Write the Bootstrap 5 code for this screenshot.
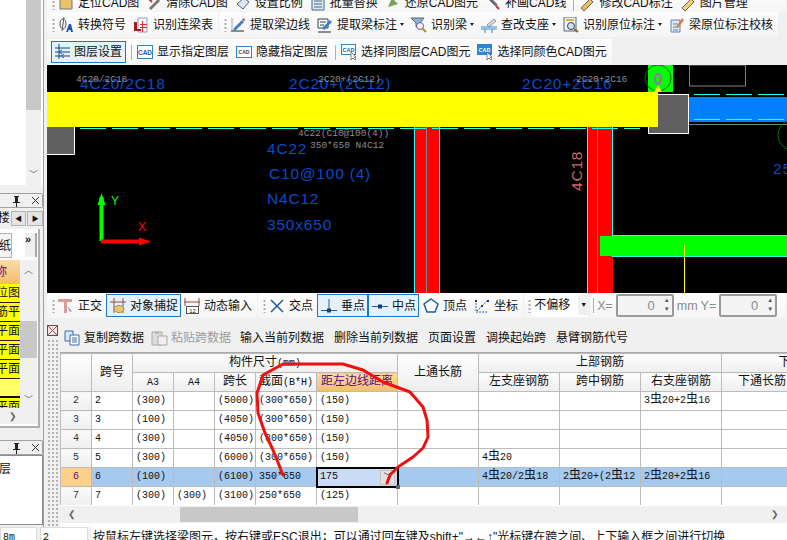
<!DOCTYPE html>
<html lang="zh">
<head>
  <meta charset="UTF-8" />
  <meta name="viewport" content="width=device-width, initial-scale=1" />
  <title>梁原位标注</title>
  <link href="https://cdn.jsdelivr.net/npm/bootstrap@5.3.0/dist/css/bootstrap.min.css" rel="stylesheet" />
  <style>
    html, body { width: 787px; height: 540px; overflow: hidden; }
    body {
      background: #f0f0f0; color: #111; position: relative;
      font: 12px/16px "Liberation Sans", "Noto Sans CJK SC", sans-serif;
    }
    .app-top { height: 527px; }
    svg { display: block; flex: none; }

    /* 左侧停靠栏 */
    .side-col { width: 47px; flex: none; overflow: hidden; }
    .side-in { width: 44px; border-right: 1px solid #a0a0a0; height: 527px; }
    .dock-a { height: 185px; background: #fff; }
    .dock-a-bar { width: 15px; margin: 0 2px 0 auto; background: #f0f0f0; }
    .dock-a-thumb { height: 110px; background: #c8c8c8; }
    .arrow-txt { font-size: 9px; line-height: 12px; text-align: center; color: #666; }
    .dock-head { height: 15px; margin-top: 8px; border: 1px solid #a0a0a0; border-left: 0; border-radius: 0 2px 2px 0; padding-left: 10px; gap: 9px; font-size: 11px; line-height: 13px; }
    .dock-head-low { margin-top: 12px; }
    .tab-row { height: 15px; margin-top: 3px; overflow: hidden; gap: 1px; }
    .tab-chr { width: 10px; font-size: 12px; line-height: 15px; direction: rtl; overflow: hidden; white-space: nowrap; }
    .tab-btn { width: 16px; height: 15px; background: #e4e4e4; border: 1px solid #b4b4b4; font-size: 7px; line-height: 13px; text-align: center; }
    .dock-b { background: #fff; height: 199px; margin-top: 3px; margin-right: 3px; border-right: 2px solid #b0b0b0; border-bottom: 2px solid #b0b0b0; }
    .tab-low { height: 31px; padding-top: 4px; }
    .tab-low-a { width: 12px; height: 25px; border: 1px solid #b4b4b4; border-left: 0; background: #f4f4f4; font-size: 12px; line-height: 24px; overflow: hidden; direction: rtl; }
    .tab-low-b { width: 12px; height: 24px; margin: 0 1px 0 auto; background: #f0f0f0; border-right: 2px solid #a8a8a8; font: 700 11px/12px "Liberation Sans", sans-serif; }
    .name-list { width: 20px; height: 148px; background: #ffff66; overflow: hidden; }
    .name-head { height: 24px; padding-right: 13px; background: linear-gradient(#fbdca8, #f3bc6c); color: #60107a; line-height: 24px; direction: rtl; white-space: nowrap; overflow: hidden; }
    .name-row { height: 19px; background: #ffff00; border-bottom: 1px solid #222; line-height: 18px; white-space: nowrap; direction: rtl; overflow: hidden; }
    .name-gap { height: 19px; background: #ffff66; border-bottom: 2px solid #111; }
    .name-bar { width: 17px; height: 148px; background: #f0f0f0; }
    .name-thumb { height: 37px; margin-top: 45px; margin-bottom: 36px; background: #c8c8c8; }
    .name-foot { height: 16px; background: #f0f0f0; font-size: 9px; line-height: 16px; color: #666; padding-left: 9px; }
    .dock-c { height: 70px; background: #fff; border: 1px solid #8c8c8c; border-left: 0; padding: 4px 31px 0 0; font-size: 12px; line-height: 18px; overflow: hidden; direction: rtl; white-space: nowrap; }

    /* 工具条 */
    .tb-row { flex: none; }
    .tb-clip { height: 12px; align-items: flex-end; overflow: hidden; }
    .tb-row2 { height: 25px; }
    .tb-row3 { height: 26px; margin-top: 2px; }
    .tb-group { height: 100%; padding: 0 5px; gap: 7px; background: linear-gradient(#fdfdfd, #f5f5f5); border-radius: 2px; margin-right: 1px; white-space: nowrap; flex: none; }
    .tb-clip .tb-group { height: 18px; flex: 1 1 auto; }
    .grip { width: 3px; height: 14px; margin-right: -4px; flex: none; background: radial-gradient(circle, #a8a8a8 1px, transparent 1.2px) 0 0 / 3px 4px; }
    .grip-btn { margin-right: -7px; }
    .tb-item { gap: 4px; flex: none; }
    .tb-caret { width: 0; height: 0; margin-left: -1px; margin-right: 0; border: 2.5px solid transparent; border-top: 3px solid #222; border-bottom: 0; }
    .tb-on { padding: 2px 3px; margin: 0; border: 1px solid #1b78c8; background: #e5f1fb; }
    .tb-sep { width: 1px; height: 15px; background: #b0b0b0; flex: none; }
    .sep-a { margin-left: -4px; margin-right: -2px; }
    .sep-b { margin-right: -2px; }

    .cad-view { height: 228px; background: #000; flex: none; overflow: hidden; }
    .cad-txt { font-family: "Liberation Sans", sans-serif; font-size: 15.5px; letter-spacing: .8px; fill: #0c4ac8; }
    .cad-sm { font-family: "Liberation Mono", monospace; font-size: 9.5px; fill: #8c8c8c; }

    .snap-row { height: 27px; flex: none; padding-bottom: 2px; }
    .snap-row .tb-on { height: 23px; padding: 2px 2px 2px 3px; }
    .snap-row .gap-tight { margin-left: -3px; }
    .snap-row .gap-tighter { margin-left: -4px; }
    .pair-left { margin-right: -7px; }
    .snap-tail { gap: 3px; padding-left: 4px; }
    .snap-tail .grip { margin-right: -2px; }
    .combo { width: 58px; height: 22px; background: #fff; padding-left: 2px; line-height: 20px; border-right: 1px solid #eee; flex: none; }
    .combo-arr { width: 11px; height: 20px; margin-left: auto; background: #f0f0f0; font-size: 7px; line-height: 20px; text-align: center; }
    .gray-lab { color: #8a8a8a; font-size: 12.5px; }
    .num-box { width: 58px; height: 23px; border: 2px solid #9a9a9a; border-radius: 2px; background: #f4f4f4; color: #8a8a8a; padding-right: 17px; text-align: right; line-height: 19px; font-size: 13px; position: relative; }
    .num-spin { position: absolute; right: 2px; top: 0; color: #555; font-size: 6px; line-height: 9px; text-align: center; }

    /* 下方表格面板 */
    .span-panel { height: 207px; flex: none; }
    .panel-grip { width: 13px; flex: none; padding-top: 5px; }
    .panel-dots { margin: 3px 2px 0 0; height: 190px; background: radial-gradient(circle, #b4b4b4 1px, transparent 1.2px) 0 0 / 4px 4px; }
    .panel-main { min-width: 0; flex: 1 1 auto; }
    .act-row { height: 32px; gap: 10px; padding: 3px 0 0 4px; white-space: nowrap; font-size: 12px; }
    .act-copy { margin-right: -3px; }
    .act-off { color: #9c9c9c; gap: 3px; margin-right: -1px; }
    .grid-box { height: 175px; border-top: 1px solid #a8a8a8; background: #fff; overflow: hidden; }
    .grid-scroll { height: 152px; overflow: hidden; }
    .span-tbl.table { width: 823px; table-layout: fixed; margin: 0; border-color: #bcbcbc; font: 10px/17px "Liberation Mono", "Noto Sans CJK SC", monospace; --bs-table-bg: transparent; }
    .span-tbl.table > :not(caption) > * > * { padding: 0 0 0 3px; height: 19px; border-width: 1px; border-color: #bcbcbc; white-space: nowrap; overflow: hidden; color: #111; box-shadow: none; }
    .span-tbl.table > thead > * > * { background: linear-gradient(#fdfdfd, #eeeeee); text-align: center; padding: 0; vertical-align: middle; font-size: 12px; line-height: 16px; }
    .span-tbl.table > thead small { font-size: 10px; line-height: 10px; }
    .span-tbl.table > tbody > * > .row-no { background: linear-gradient(#fafafa, #efefef); text-align: center; padding: 0; color: #333; }
    .span-tbl.table > tbody > * > .col-frz { border-left: 1px solid #111; }
    .span-tbl.table > thead > * > .col-act { background: linear-gradient(#fbdca8, #f3bc6c); color: #60107a; }
    .span-tbl.table > tbody > .row-sel > * { background: #a6c9ee; }
    .span-tbl.table > tbody > .row-sel > .row-no { background: #fdd08a; color: #60107a; }
    .span-tbl.table > tbody > .row-sel > .cell-edit { background: #c9dcf5; outline: 2px solid #000; outline-offset: -1px; position: relative; overflow: visible; }
    .rebar { font-size: 12px; line-height: 10px; }
    .cell-drop { position: absolute; right: 2px; top: 2px; width: 15px; height: 15px; background: #e2e2e2; border: 1px solid #c4c4c4; line-height: 12px; text-align: center; font-size: 8px; padding: 0; }
    .cell-hdl { position: absolute; right: -3px; bottom: -3px; width: 4px; height: 4px; background: #666; }
    .w31 { width: 31px; } .w41 { width: 41px; } .w61 { width: 61px; } .w81 { width: 81px; }
    .grid-hbar { height: 17px; margin-top: 1px; background: #f0f0f0; color: #666; font-size: 9px; line-height: 17px; }
    .hbar-thumb { width: 178px; height: 15px; background: #c8c8c8; margin-left: 104px; margin-right: auto; }

    .status-row { height: 13px; padding-top: 0; font-size: 12px; line-height: 20px; overflow: hidden; }
    .st-cell { height: 16px; background: #fff; border: 1px solid #dcdcdc; padding-left: 2px; font-family: "Liberation Mono", monospace; font-size: 10px; flex: none; overflow: hidden; }
    .st-a { width: 37px; } .st-b { width: 48px; margin-left: 3px; }
    .st-msg { margin-left: 3px; padding-left: 2px; background: #fff; flex: 1 1 auto; white-space: nowrap; overflow: hidden; }

    .ink-layer { position: absolute; left: 0; top: 0; pointer-events: none; }
  </style>
</head>
<body>
  <div class="app-top d-flex">
    <!-- 左侧停靠栏 -->
    <aside class="side-col">
      <div class="side-in d-flex flex-column">
        <div class="dock-a d-flex">
          <div class="dock-a-bar d-flex flex-column">
            <div class="dock-a-thumb"></div>
            <div class="arrow-txt mt-auto mb-1">﹀</div>
          </div>
        </div>
        <div class="dock-head d-flex align-items-center">
          <svg width="12" height="12" viewBox="0 0 12 12"><path d="M4 1h5v1h-1v5h2v1H3V7h2V2H4zM6 8h1v4H6z" fill="#222"/></svg>
          <svg width="9" height="9" viewBox="0 0 9 9"><path d="M1 1l7 7M8 1L1 8" stroke="#333" fill="none"/></svg>
        </div>
        <div class="tab-row d-flex">
          <div class="tab-chr">楼</div>
          <div class="tab-btn">◀</div>
          <div class="tab-btn">▶</div>
        </div>
        <div class="dock-b">
          <div class="tab-low d-flex">
            <div class="tab-low-a">纸</div>
            <div class="tab-low-b">»</div>
          </div>
          <div class="d-flex">
            <div class="name-list">
              <div class="name-head">称</div>
              <div class="name-row">定位图</div>
              <div class="name-row">钢筋平</div>
              <div class="name-row">筋平面</div>
              <div class="name-row">筋平面</div>
              <div class="name-row">筋平面</div>
              <div class="name-gap"></div>
              <div class="name-row">筋平面</div>
            </div>
            <div class="name-bar">
              <div class="arrow-txt pt-1">︿</div>
              <div class="name-thumb"></div>
              <div class="arrow-txt">﹀</div>
            </div>
          </div>
          <div class="name-foot">❯</div>
        </div>
        <div class="dock-head dock-head-low d-flex align-items-center">
          <svg width="12" height="12" viewBox="0 0 12 12"><path d="M4 1h5v1h-1v5h2v1H3V7h2V2H4zM6 8h1v4H6z" fill="#222"/></svg>
          <svg width="9" height="9" viewBox="0 0 9 9"><path d="M1 1l7 7M8 1L1 8" stroke="#333" fill="none"/></svg>
        </div>
        <div class="dock-c">层</div>
      </div>
    </aside>

    <main class="flex-grow-1 d-flex flex-column" style="min-width:0">
      <!-- 第一行工具条，上半截被裁掉 -->
      <div class="tb-row tb-clip d-flex">
        <div class="tb-group d-flex align-items-center">
          <div class="grip"></div>
          <div class="tb-item d-flex align-items-center"><svg width="16" height="16" viewBox="0 0 16 16"><path d="M2 2h12v12H2z" fill="#e9c46a" stroke="#777"/></svg><span>定位CAD图</span></div>
          <div class="tb-item d-flex align-items-center"><svg width="16" height="16" viewBox="0 0 16 16"><path d="M3 13l9-9 2 2-9 9z" fill="#777"/><path d="M3 4l3 3" stroke="#b33" stroke-width="2"/></svg><span>清除CAD图</span></div>
          <div class="tb-item d-flex align-items-center"><svg width="16" height="16" viewBox="0 0 16 16"><path d="M2 9l7-6 5 4-6 7z" fill="#dfe7f2" stroke="#567"/></svg><span>设置比例</span></div>
          <div class="tb-item d-flex align-items-center"><svg width="16" height="16" viewBox="0 0 16 16"><path d="M2 1h12v14H2z" fill="#dfe7f2" stroke="#46688e"/><path d="M4 6h8M4 9h8M4 12h8" stroke="#46688e"/></svg><span>批量替换</span></div>
          <div class="tb-item d-flex align-items-center"><svg width="16" height="16" viewBox="0 0 16 16"><path d="M3 12l4-9 6 6z" fill="#7aa05a"/></svg><span>还原CAD图元</span></div>
          <div class="tb-item d-flex align-items-center"><svg width="16" height="16" viewBox="0 0 16 16"><path d="M2 3l8 8 3-1-8-8z" fill="#667"/><path d="M11 11l3 3" stroke="#b33" stroke-width="2"/></svg><span>补画CAD线</span></div>
          <div class="tb-sep sep-b"></div>
          <div class="tb-item d-flex align-items-center"><svg width="16" height="16" viewBox="0 0 16 16"><path d="M2 13l9-9 3 3-9 9z" fill="#e8c15a" stroke="#666"/></svg><span>修改CAD标注</span></div>
          <div class="tb-item d-flex align-items-center"><svg width="16" height="16" viewBox="0 0 16 16"><path d="M2 13l9-9 3 3-9 9z" fill="#f0d070" stroke="#666"/></svg><span>图片管理</span></div>
        </div>
      </div>

      <!-- 第二行工具条 -->
      <div class="tb-row tb-row2 d-flex">
        <div class="tb-group d-flex align-items-center">
          <div class="grip"></div>
          <div class="tb-item d-flex align-items-center"><svg width="16" height="16" viewBox="0 0 16 16"><ellipse cx="5" cy="7" rx="3" ry="5" fill="none" stroke="#555"/><path d="M6 0L4 14" stroke="#555"/><path d="M8 15l3-8h2l2 8h-2l-.5-2h-2l-.6 2z" fill="#1c57b8"/></svg><span>转换符号</span></div>
          <div class="tb-item d-flex align-items-center"><svg width="16" height="16" viewBox="0 0 16 16"><path d="M5 1h9v14H5z" fill="#f4f6fa" stroke="#8ea2c0"/><path d="M1 5h3v7h4v2H1z" fill="#a61c1c"/><path d="M9 4h1v11H9zM7 7h7v1H7zM7 10h7v1H7z" fill="#c33"/></svg><span>识别连梁表</span></div>
        </div>
        <div class="tb-group d-flex align-items-center">
          <div class="grip"></div>
          <div class="tb-item d-flex align-items-center"><svg width="16" height="16" viewBox="0 0 16 16"><path d="M1 14h13" stroke="#222"/><path d="M2 1v12" stroke="#9ab"/><path d="M4 11l8-8 2 2-8 8-3 1z" fill="#3a7fc2"/><path d="M12 3l2-2 1 3z" fill="#a22"/></svg><span>提取梁边线</span></div>
          <div class="tb-item d-flex align-items-center"><svg width="16" height="16" viewBox="0 0 16 16"><path d="M1 2h10v9H1z" fill="#fff" stroke="#245"/><path d="M3 5h6M3 8h4" stroke="#245"/><path d="M5 11l8-8 2 2-8 8z" fill="#3a7fc2"/><path d="M1 15h13" stroke="#222"/></svg><span>提取梁标注</span><span class="tb-caret"></span></div>
          <div class="tb-item d-flex align-items-center"><svg width="16" height="16" viewBox="0 0 16 16"><path d="M0 1h13l-4 5v3l-4 1V6z" fill="#8fb4d8" stroke="#567"/><circle cx="9" cy="9" r="3.5" fill="#eef" stroke="#667"/><path d="M11.5 11.5L15 15" stroke="#b8862a" stroke-width="2"/></svg><span>识别梁</span><span class="tb-caret"></span></div>
          <div class="tb-item d-flex align-items-center"><svg width="16" height="16" viewBox="0 0 16 16"><path d="M6 8l7-6 2 2-7 6z" fill="#d8dce2" stroke="#8a94a0"/><path d="M0 10h16M0 12h16" stroke="#3a86c8"/><path d="M4 12v4M11 12v4" stroke="#3a86c8"/></svg><span>查改支座</span><span class="tb-caret"></span></div>
          <div class="tb-item d-flex align-items-center"><svg width="16" height="16" viewBox="0 0 16 16"><path d="M1 0h12v14H1z" fill="#eef2f6" stroke="#567"/><path d="M3 2h8v2H3z" fill="#e0b040"/><circle cx="8" cy="9" r="3.5" fill="#cfe0f0" stroke="#345"/><path d="M11 12l4 3" stroke="#8a6a2a" stroke-width="2"/></svg><span>识别原位标注</span><span class="tb-caret"></span></div>
          <div class="tb-item d-flex align-items-center"><svg width="16" height="16" viewBox="0 0 16 16"><path d="M2 3h9v12H2z" fill="#dfeaf6" stroke="#5a86b8"/><path d="M4 7h5M4 10h5M4 13h5" stroke="#5a86b8"/><path d="M7 10l6-9 2 2-6 8z" fill="#e07a50"/></svg><span>梁原位标注校核</span></div>
        </div>
      </div>

      <!-- 第三行工具条 -->
      <div class="tb-row tb-row3 d-flex">
        <div class="tb-group d-flex align-items-center">
          <div class="grip grip-btn"></div>
          <div class="tb-item tb-on sep-a d-flex align-items-center"><svg width="15" height="16" viewBox="0 0 15 16"><path d="M4 0v15M0 4h15M0 8h15M0 12h15" stroke="#1a3f78" fill="none"/><path d="M7 6l-3 2 3 2M9 10l-3 2 3 2" stroke="#1a6ac0" fill="none"/></svg><span>图层设置</span></div>
          <div class="tb-sep sep-b"></div>
          <div class="tb-item d-flex align-items-center"><svg width="16" height="14" viewBox="0 0 16 14"><rect x=".5" y=".5" width="15" height="13" fill="#fff" stroke="#2a86c8"/><text x="8" y="9.5" font-size="6.5" font-weight="700" text-anchor="middle" fill="#1a5ea8" font-family="Liberation Sans">CAD</text></svg><span>显示指定图层</span></div>
          <div class="tb-item d-flex align-items-center"><svg width="16" height="12" viewBox="0 0 16 12"><rect x=".5" y=".5" width="15" height="11" fill="#fff" stroke="#2a86c8"/><text x="8" y="8" font-size="5" font-weight="700" text-anchor="middle" fill="#444" font-family="Liberation Sans">CAD</text></svg><span>隐藏指定图层</span></div>
          <div class="tb-sep sep-b"></div>
          <div class="tb-item d-flex align-items-center"><svg width="16" height="16" viewBox="0 0 16 16"><rect x=".5" y=".5" width="14" height="10" fill="#fff" stroke="#2a86c8"/><text x="7.5" y="8" font-size="5.5" font-weight="700" text-anchor="middle" fill="#1a5ea8" font-family="Liberation Sans">CAD</text><path d="M10 8v8l2-2 2 2 1-1-2-2h2z" fill="#fff" stroke="#555" stroke-width=".7"/></svg><span>选择同图层CAD图元</span></div>
          <div class="tb-item d-flex align-items-center"><svg width="16" height="16" viewBox="0 0 16 16"><rect width="15" height="11" fill="#2a86d8"/><text x="7.5" y="8" font-size="5.5" font-weight="700" text-anchor="middle" fill="#fff" font-family="Liberation Sans">CAD</text><path d="M10 8v8l2-2 2 2 1-1-2-2h2z" fill="#fff" stroke="#555" stroke-width=".7"/></svg><span>选择同颜色CAD图元</span></div>
        </div>
      </div>

      <!-- CAD 绘图区，svg 内直接用屏幕坐标 -->
      <div class="cad-view">
        <svg width="740" height="228" viewBox="47 65 740 228">
          <rect x="414" y="127" width="26" height="166" fill="#f00"/>
          <rect x="588" y="127" width="25" height="166" fill="#f00"/>
          <path d="M414.500 127V293M439.500 127V293M587.500 127V293M612.500 127V235" stroke="#2ff" fill="none"/>
          <path d="M426.500 127V293M597.500 127V293" stroke="#888" fill="none"/>
          <path d="M80 128.500H640" stroke="#2ff" stroke-dasharray="26 6" fill="none"/>
          <path d="M612 235.500H787M612 256.500H787" stroke="#2ff" fill="none"/>
          <rect x="600" y="236" width="187" height="20" fill="#0f0"/>
          <path d="M684.500 245V293" stroke="#ff0" fill="none"/>

          <rect x="648" y="65" width="25" height="27" fill="#0f0"/>
          <circle cx="658" cy="78" r="13" fill="none" stroke="#007000"/>
          <ellipse cx="658" cy="79" rx="3" ry="5" fill="none" stroke="#b060c0" stroke-width="2"/>
          <path d="M654 92l4-7 4 7z" fill="#ff0"/>
          <rect x="648.500" y="94.500" width="40" height="39" fill="#606060" stroke="#fff"/>
          <rect x="47" y="92" width="611" height="35" fill="#ff0"/>
          <rect x="47" y="127" width="27.500" height="27.500" fill="#606060"/>
          <path d="M74.500 127V154.500H47" stroke="#fff" fill="none"/>

          <rect x="689.500" y="65" width="56" height="21" fill="none" stroke="#808080"/>
          <rect x="689" y="97" width="98" height="25" fill="#0080ff"/>
          <path d="M694 94.500H787M694 119.500H787" stroke="#2ff" stroke-dasharray="26 6" fill="none"/>
          <path d="M689 124.500H787" stroke="#808080" fill="none"/>
          <circle cx="793" cy="135" r="15" fill="none" stroke="#007000"/>

          <text class="cad-txt" x="80" y="89">4C20/2C18</text>
          <text class="cad-txt" x="289" y="89">2C20+(2C12)</text>
          <text class="cad-txt" x="522" y="89">2C20+2C16</text>
          <text class="cad-sm" x="76" y="82">4C20/2C18</text>
          <text class="cad-sm" x="318" y="82">2C20+(2C12)</text>
          <text class="cad-sm" x="576" y="82">2C20+2C16</text>
          <text class="cad-sm" x="298" y="136">4C22(C10@100(4))</text>
          <text class="cad-sm" x="310" y="148">350*650 N4C12</text>
          <text class="cad-txt" x="267" y="154">4C22</text>
          <text class="cad-txt" x="269" y="179">C10@100 (4)</text>
          <text class="cad-txt" x="267" y="204">N4C12</text>
          <text class="cad-txt" x="267" y="230">350x650</text>
          <text class="cad-txt" x="773" y="174">25</text>
          <text class="cad-txt" transform="rotate(-90 582 191)" x="582" y="191" style="fill:#d06868">4C18</text>

          <path d="M101.500 197V241" stroke="#0f0" stroke-width="4"/>
          <path d="M101.500 193l-4 12h8z" fill="#0f0"/>
          <path d="M101 241.500H142" stroke="#f00" stroke-width="4"/>
          <path d="M151 241.500l-12-4v8z" fill="#f00"/>
          <text x="111" y="205" font-size="12" fill="#0f0" font-family="Liberation Sans">Y</text>
          <text x="138" y="231" font-size="12" fill="#f00" font-family="Liberation Sans">X</text>
        </svg>
      </div>

      <!-- 捕捉工具条 -->
      <div class="snap-row d-flex">
        <div class="tb-group d-flex align-items-center">
          <div class="grip"></div>
          <div class="tb-item d-flex align-items-center"><svg width="16" height="16" viewBox="0 0 16 16"><path d="M0 1h14v3H9v11H6V4H0z" fill="#d89a9a"/><path d="M9 8l5 5-2 1z" fill="#8aa0b8"/></svg><span>正交</span></div>
          <div class="tb-item tb-on gap-tight d-flex align-items-center"><svg width="16" height="16" viewBox="0 0 16 16"><path d="M4 0v15M13 0v15" stroke="#9a4a3a"/><path d="M0 4h16" stroke="#9a4a3a"/><ellipse cx="9" cy="11" rx="5" ry="3.500" fill="#e8c878" stroke="#a88a4a"/></svg><span>对象捕捉</span></div>
          <div class="tb-item gap-tighter d-flex align-items-center"><svg width="16" height="16" viewBox="0 0 16 16"><path d="M1 0v8M15 0v8M0 4h16" stroke="#9a4a3a"/><rect x="2.500" y="8.500" width="12" height="7" fill="#fff" stroke="#555"/><text x="8.500" y="14.500" font-size="6" text-anchor="middle" fill="#222" font-family="Liberation Sans">12</text></svg><span>动态输入</span></div>
        </div>
        <div class="tb-group d-flex align-items-center">
          <div class="grip"></div>
          <div class="tb-item d-flex align-items-center"><svg width="16" height="16" viewBox="0 0 16 16"><path d="M2 2l12 12M14 2L2 14" stroke="#1a5ea8" stroke-width="1.500"/></svg><span>交点</span></div>
          <div class="tb-item tb-on gap-tight pair-left d-flex align-items-center"><svg width="16" height="16" viewBox="0 0 16 16"><path d="M8 1v12M0 12.500h16" stroke="#1a5ea8"/><rect x="6" y="10.500" width="4" height="4" fill="#1a3f78"/></svg><span>垂点</span></div>
          <div class="tb-item tb-on d-flex align-items-center"><svg width="16" height="16" viewBox="0 0 16 16"><path d="M0 8.500h16" stroke="#1a5ea8"/><rect x="6" y="6.500" width="4" height="4" fill="#1a3f78"/></svg><span>中点</span></div>
          <div class="tb-item gap-tight d-flex align-items-center"><svg width="16" height="16" viewBox="0 0 16 16"><path d="M8 1l7 5-3 8H4L1 6z" fill="#fff" stroke="#1a5ea8" stroke-width="1.500"/></svg><span>顶点</span></div>
          <div class="tb-item d-flex align-items-center"><svg width="16" height="16" viewBox="0 0 16 16"><path d="M2 5v9h12M3 13l10-10" stroke="#1a6ac0" stroke-dasharray="2 1" fill="none"/><rect x="1" y="2" width="2" height="2" fill="#333"/><rect x="13" y="2" width="2" height="2" fill="#333"/><rect x="7" y="7" width="2" height="2" fill="#333"/></svg><span>坐标</span></div>
        </div>
        <div class="tb-group snap-tail d-flex align-items-center flex-grow-1">
          <div class="grip"></div>
          <div class="combo d-flex"><span>不偏移</span><div class="combo-arr">▼</div></div>
          <div class="tb-sep"></div>
          <span class="gray-lab">X=</span>
          <div class="num-box">0<div class="num-spin">▲<br>▼</div></div>
          <span class="gray-lab">mm</span>
          <span class="gray-lab">Y=</span>
          <div class="num-box">0<div class="num-spin">▲<br>▼</div></div>
        </div>
      </div>

      <!-- 梁平法表格 -->
      <div class="span-panel d-flex">
        <div class="panel-grip">
          <svg width="11" height="11" viewBox="0 0 11 11"><rect x=".5" y=".5" width="10" height="10" fill="#f4e4e4" stroke="#555"/><path d="M1 1l9 9M10 1l-9 9" stroke="#b05050"/></svg>
          <div class="panel-dots"></div>
        </div>
        <div class="panel-main">
          <div class="act-row d-flex align-items-center">
            <div class="tb-item act-copy d-flex align-items-center"><svg width="16" height="16" viewBox="0 0 16 16"><path d="M1 1h8v10H1z" fill="#d8e8f8" stroke="#3a6ab0"/><path d="M6 5h9v10H6z" fill="#fff" stroke="#3a6ab0"/><path d="M8 8h5M8 10h5M8 12h5" stroke="#3a6ab0"/></svg><span>复制跨数据</span></div>
            <div class="tb-item act-off d-flex align-items-center"><svg width="17" height="16" viewBox="0 0 17 16"><path d="M1 2h10v13H1z" fill="#ddd" stroke="#aaa"/><path d="M4 1h4v3H4z" fill="#bbb"/><path d="M7 6h9v9H7z" fill="#f0f0f0" stroke="#aaa"/></svg><span>粘贴跨数据</span></div>
            <span>输入当前列数据</span>
            <span>删除当前列数据</span>
            <span>页面设置</span>
            <span>调换起始跨</span>
            <span>悬臂钢筋代号</span>
          </div>
          <div class="grid-box">
            <div class="grid-scroll">
              <table class="table table-bordered span-tbl">
                <colgroup>
                  <col class="w31"><col class="w41"><col class="w41"><col class="w41"><col class="w41"><col class="w61"><col class="w81"><col class="w81"><col class="w81"><col class="w81"><col class="w81"><col class="w81"><col class="w81">
                </colgroup>
                <thead>
                  <tr>
                    <th rowspan="2" class="fw-normal"></th>
                    <th rowspan="2" class="fw-normal">跨号</th>
                    <th colspan="5" class="fw-normal">构件尺寸<small>(mm)</small></th>
                    <th rowspan="2" class="fw-normal">上通长筋</th>
                    <th colspan="3" class="fw-normal">上部钢筋</th>
                    <th colspan="2" class="fw-normal">下部钢筋</th>
                  </tr>
                  <tr>
                    <th class="fw-normal"><small>A3</small></th>
                    <th class="fw-normal"><small>A4</small></th>
                    <th class="fw-normal">跨长</th>
                    <th class="fw-normal">截面<small>(B*H)</small></th>
                    <th class="fw-normal col-act">距左边线距离</th>
                    <th class="fw-normal">左支座钢筋</th>
                    <th class="fw-normal">跨中钢筋</th>
                    <th class="fw-normal">右支座钢筋</th>
                    <th class="fw-normal">下通长筋</th>
                    <th class="fw-normal">下部钢筋</th>
                  </tr>
                </thead>
                <tbody>
                  <tr><td class="row-no">2</td><td>2</td><td class="col-frz">(300)</td><td></td><td>(5000)</td><td>(300*650)</td><td>(150)</td><td></td><td></td><td></td><td>3<span class="rebar">虫</span>20+2<span class="rebar">虫</span>16</td><td></td><td></td></tr>
                  <tr><td class="row-no">3</td><td>3</td><td class="col-frz">(100)</td><td></td><td>(4050)</td><td>(300*650)</td><td>(150)</td><td></td><td></td><td></td><td></td><td></td><td></td></tr>
                  <tr><td class="row-no">4</td><td>4</td><td class="col-frz">(300)</td><td></td><td>(4050)</td><td>(300*650)</td><td>(150)</td><td></td><td></td><td></td><td></td><td></td><td></td></tr>
                  <tr><td class="row-no">5</td><td>5</td><td class="col-frz">(300)</td><td></td><td>(6000)</td><td>(300*650)</td><td>(150)</td><td></td><td>4<span class="rebar">虫</span>20</td><td></td><td></td><td></td><td></td></tr>
                  <tr class="row-sel"><td class="row-no">6</td><td>6</td><td class="col-frz">(100)</td><td></td><td>(6100)</td><td>350*650</td><td class="cell-edit">175<div class="cell-drop">﹀</div><div class="cell-hdl"></div></td><td></td><td>4<span class="rebar">虫</span>20/2<span class="rebar">虫</span>18</td><td>2<span class="rebar">虫</span>20+(2<span class="rebar">虫</span>12</td><td>2<span class="rebar">虫</span>20+2<span class="rebar">虫</span>16</td><td></td><td></td></tr>
                  <tr><td class="row-no">7</td><td>7</td><td class="col-frz">(300)</td><td>(300)</td><td>(3100)</td><td>250*650</td><td>(125)</td><td></td><td></td><td></td><td></td><td></td><td></td></tr>
                </tbody>
              </table>
            </div>
            <div class="grid-hbar d-flex align-items-center px-1">
              <span class="ps-1">❮</span>
              <div class="hbar-thumb"></div>
              <span class="pe-1">❯</span>
            </div>
          </div>
        </div>
      </div>
    </main>
  </div>

  <!-- 状态栏 -->
  <footer class="status-row d-flex">
    <div class="st-cell st-a">8m</div>
    <div class="st-cell st-b">2</div>
    <div class="st-msg">按鼠标左键选择梁图元，按右键或ESC退出；可以通过回车键及shift+"→←↑"光标键在跨之间、上下输入框之间进行切换</div>
  </footer>

  <!-- 截图上的红色手绘圈 -->
  <svg class="ink-layer" width="787" height="540" viewBox="0 0 787 540">
    <path d="M283 475L273 450 265 433 258 413 257 393 263 375 283 364 313 364 343 364 363 370 383 382 410 392 423 407 427 420 428 437 423 448 413 457 398 467 390 475 387 483" fill="none" stroke="#f01010" stroke-width="3" stroke-linejoin="round" stroke-linecap="round"/>
  </svg>

  <script src="https://cdn.jsdelivr.net/npm/bootstrap@5.3.0/dist/js/bootstrap.bundle.min.js"></script>
</body>
</html>
